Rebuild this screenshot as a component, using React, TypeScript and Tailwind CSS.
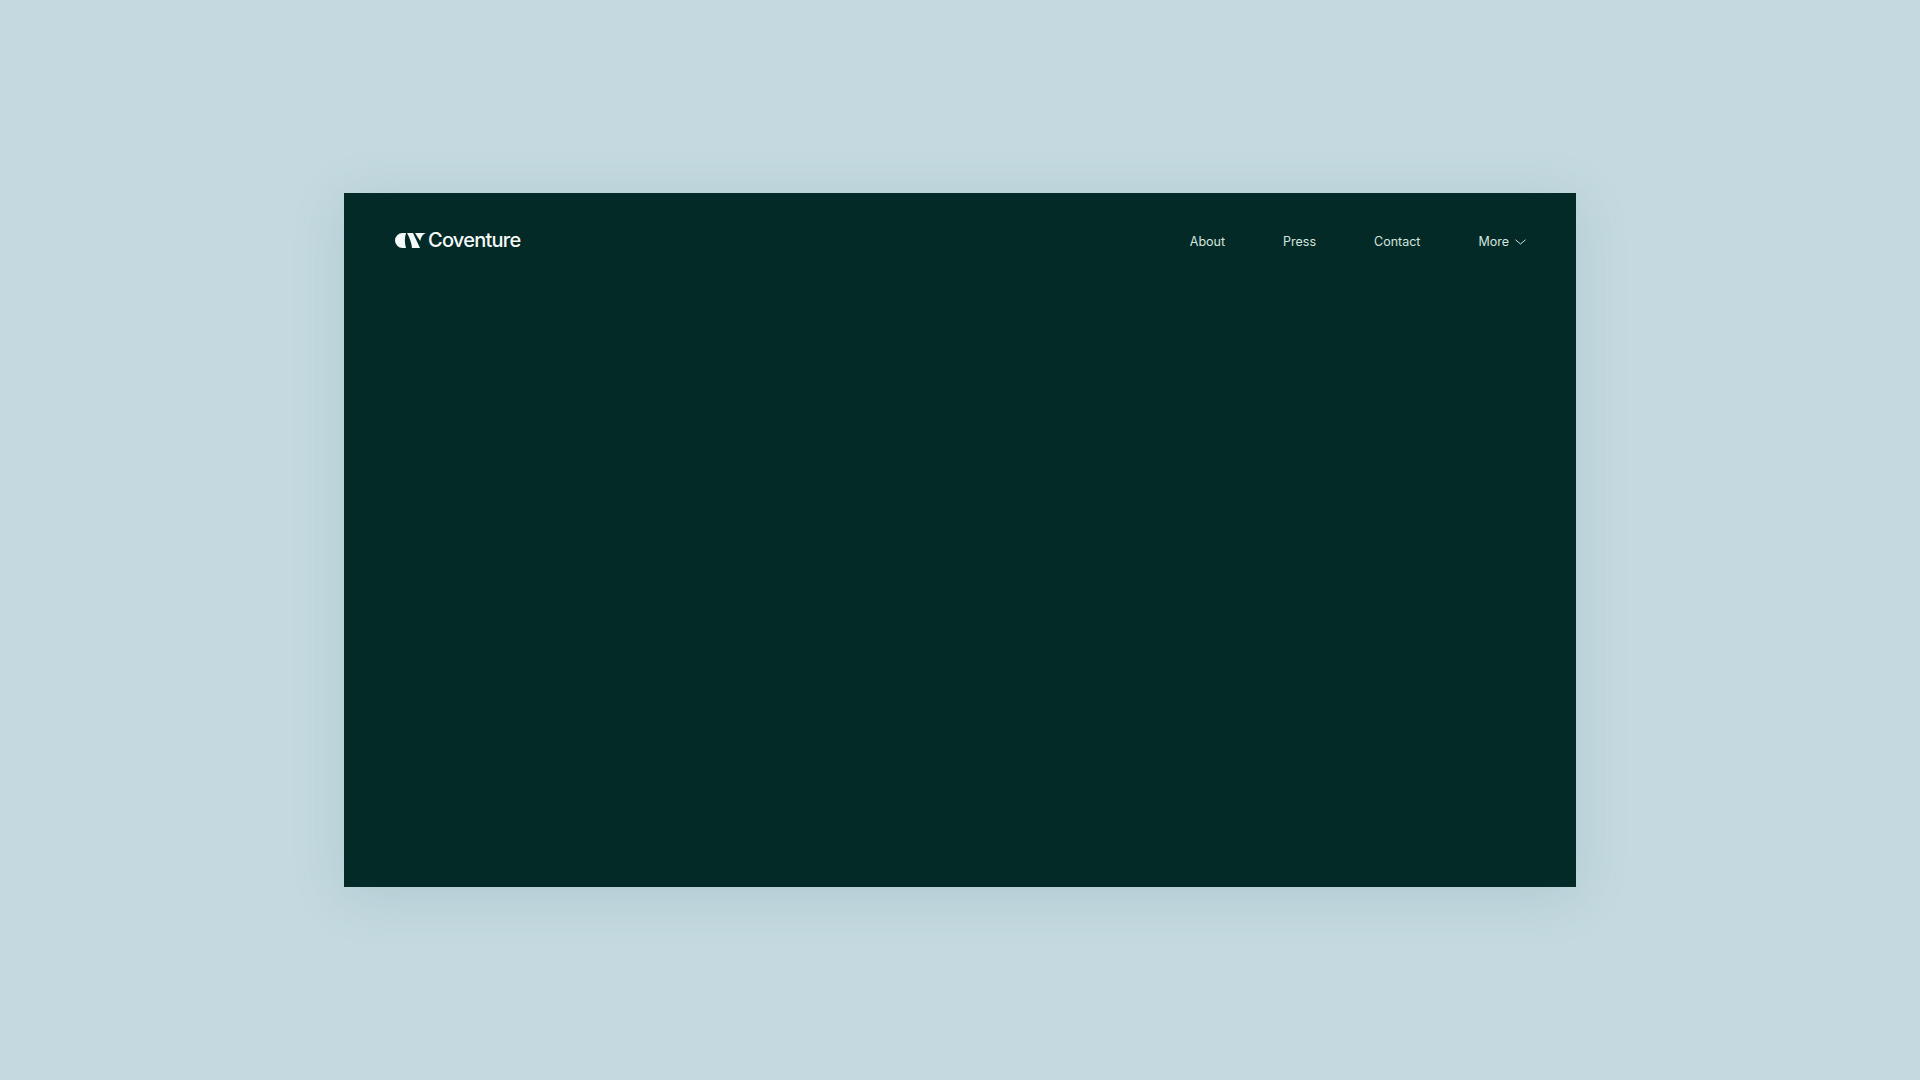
const links = ["About", "Press", "Contact"];

function Logo() {
  return (
    <svg width="31" height="15" viewBox="0 0 31 15" fill="#f4faf7">
      <path d="M7.5 0 H11 C9.5 5 9.5 10 11 15 H7.5 A7.5 7.5 0 0 1 7.5 0 Z" />
      <path d="M12 0 H18 L25 15 H17 C16.5 9.5 14.5 4.5 12 0 Z" />
      <path d="M20 0 H31 C28 1 26 3.5 25.2 8 Z" />
    </svg>
  );
}

function Chevron() {
  return (
    <svg width="11" height="6" viewBox="0 0 11 6" fill="none" stroke="currentColor" strokeWidth="1">
      <path d="M0.5 0.8 L5.5 5 L10.5 0.8" />
    </svg>
  );
}

export default function App() {
  return (
    <div className="w-full h-[1080px] bg-[#c4dae0] flex items-center justify-center font-['Inter',sans-serif]">
      <div className="w-[1232px] h-[694px] bg-[#032a27] shadow-[0_8px_50px_rgba(70,110,125,0.16)] flex items-start justify-between pl-[51px] pr-[50px] pt-[35px]">
        <div className="flex items-center gap-[2px]">
          <Logo />
          <span className="text-[20px] leading-[24px] font-medium tracking-[-0.75px] text-[#f4faf7]">Coventure</span>
        </div>
        <nav className="flex items-center gap-[58px] pt-[4px] text-[12.5px] leading-[20px] text-[#d4e4de]">
          {links.map((l) => (
            <a key={l}>{l}</a>
          ))}
          <a className="flex items-center gap-[6px]">
            More
            <Chevron />
          </a>
        </nav>
      </div>
    </div>
  );
}
